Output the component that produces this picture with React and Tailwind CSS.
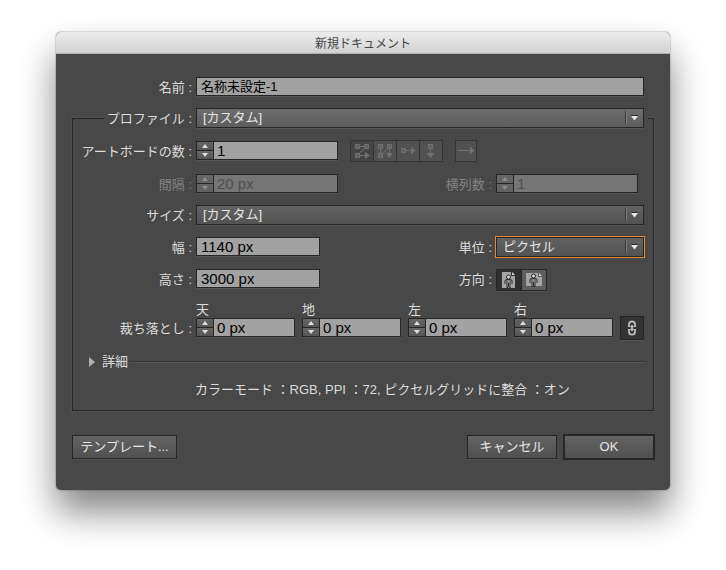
import { useState } from "react";

const jp = "font-['Liberation_Sans','Noto_Sans_CJK_JP',sans-serif]";
const edge = "border border-[#262626] shadow-[0_1px_0_#555555]";

function Label({ htmlFor, children, className = "", dim = false }) {
  return (
    <label
      htmlFor={htmlFor}
      className={`h-[19px] shrink-0 pr-1 text-right text-[13px] leading-[21px] whitespace-nowrap ${dim ? "text-[#828282]" : "text-[#dcdcdc]"} ${className}`}
    >
      {children}
    </label>
  );
}

function TextField({ id, value, className = "" }) {
  return (
    <input
      id={id}
      type="text"
      defaultValue={value}
      className={`h-[19px] min-w-0 rounded-none bg-[#a2a2a2] px-1 pt-px text-black outline-none ${edge} ${className}`}
    />
  );
}

function Stepper({ id, value, disabled = false, className = "" }) {
  const [text, setText] = useState(value);
  const step = (delta) => {
    const unit = text.replace(/^-?\d+/, "");
    setText(`${(parseInt(text, 10) || 0) + delta}${unit}`);
  };
  const button = `flex flex-1 items-center justify-center bg-linear-to-b ${
    disabled ? "from-[#666666] to-[#626262] text-[#8e8e8e]" : "from-[#666666] to-[#555555] text-[#dedede]"
  }`;
  return (
    <div className={`flex h-[19px] min-w-0 ${edge} ${className}`}>
      <div className="flex w-4 shrink-0 flex-col gap-px bg-[#262626]">
        <button type="button" aria-label="増やす" disabled={disabled} onClick={() => step(1)} className={button}>
          <svg width="6" height="4" viewBox="0 0 6 4" fill="currentColor"><path d="M0 4 3 0l3 4z" /></svg>
        </button>
        <button type="button" aria-label="減らす" disabled={disabled} onClick={() => step(-1)} className={button}>
          <svg width="6" height="4" viewBox="0 0 6 4" fill="currentColor"><path d="M0 0h6L3 4z" /></svg>
        </button>
      </div>
      <input
        id={id}
        type="text"
        value={text}
        disabled={disabled}
        onChange={(e) => setText(e.target.value)}
        className={`w-0 min-w-0 flex-1 rounded-none border-l border-[#262626] px-[3px] text-[15px] leading-[17px] outline-none ${
          disabled ? "bg-[#757575] text-[#505050]" : "bg-[#a2a2a2] text-black"
        }`}
      />
    </div>
  );
}

function Dropdown({ id, options, focused = false, light = false, className = "" }) {
  return (
    <div className={`relative ${className}`}>
      <select
        id={id}
        className={`block h-5 w-full appearance-none rounded-none border border-[#262626] bg-linear-to-b pl-[6px] text-[13px] leading-[18px] text-[#e6e6e6] outline-none ${
          light ? "from-[#6d6d6d] to-[#5d5d5d]" : "from-[#636363] to-[#525252]"
        } ${focused ? "shadow-[0_0_0_1px_#e08a3c]" : "shadow-[0_1px_0_#555555]"}`}
      >
        {options.map((o) => (
          <option key={o}>{o}</option>
        ))}
      </select>
      <svg className="pointer-events-none absolute top-[3px] right-[5px]" width="14" height="14" viewBox="0 0 14 14">
        <path d="M.5 0v13" stroke="#3a3a3a" />
        <path d="M1.5 0v13" stroke="#7d7d7d" />
        <path d="M6 4.500h7" stroke="#2c2c2c" />
        <path d="M6 5h7L9.500 9.500z" fill="#e8e8e8" />
      </svg>
    </div>
  );
}

function GlyphButton({ label, pressed = false, children, className = "" }) {
  return (
    <button
      type="button"
      aria-label={label}
      aria-pressed={pressed}
      className={`flex h-[22px] items-center justify-center border border-[#343434] ${pressed ? "bg-[#454545]" : "bg-[#515151]"} ${className}`}
    >
      <svg className="shrink-0" width="20" height="20" viewBox="0 0 20 20" fill="none" stroke="#707070">
        {children}
      </svg>
    </button>
  );
}

function Person() {
  return (
    <g>
      <path d="M-3.500 8V5Q-3.500 3.500-2 3.500H2Q3.500 3.500 3.500 5V8" stroke="#2c2c2c" fill="none" />
      <path d="M-1.500 4V11.500M1.500 4V11.500M-2 11.500h1.500M.5 11.500H2" stroke="#2c2c2c" fill="none" />
      <path d="M0 4v3" stroke="#8d8d8d" strokeWidth="2" />
      <path d="M0 7v4" stroke="#2c2c2c" />
      <circle cx="0" cy="1" r="2" fill="#d8d8d8" stroke="#2c2c2c" />
    </g>
  );
}

const bleeds = [
  ["bleed-top", "天"],
  ["bleed-bottom", "地"],
  ["bleed-left", "左"],
  ["bleed-right", "右"],
];

export default function App() {
  const [linked, setLinked] = useState(true);
  const [portrait, setPortrait] = useState(true);
  const action = "bg-linear-to-b from-[#636363] to-[#505050] text-[13px] text-[#e6e6e6]";

  return (
    <main className={`bg-white px-14 pt-8 pb-20 ${jp}`}>
      <form
        onSubmit={(e) => e.preventDefault()}
        className="rounded-[5px] bg-[#484848] shadow-[0_0_1px_1px_rgba(0,0,0,0.14),0_22px_36px_rgba(0,0,0,0.48)]"
      >
        <h1 className="h-[22px] rounded-t-[5px] border-b border-[#aeb2ae] bg-linear-to-b from-[#ececec] to-[#d2d2d2] text-center text-[12px] leading-[24px] text-[#444444]">
          新規ドキュメント
        </h1>

        <div className="px-4 pt-[23px] pb-[30px]">
          <div className="flex pr-[10px]">
            <Label htmlFor="name" className="w-[124px]">名前 :</Label>
            <TextField id="name" value="名称未設定-1" className="flex-1 text-[13px]" />
          </div>

          <section className="mt-[22px] border border-[#262626] pb-[10px] shadow-[0_0_0_1px_#505050]">
            <div className="-mt-[11px] mr-[5px] ml-[31px] flex bg-[#484848] pr-1">
              <Label htmlFor="profile" className="w-[92px]">プロファイル :</Label>
              <Dropdown id="profile" options={["[カスタム]"]} light className="flex-1" />
            </div>

            <div className="pr-[9px]">
              <div className="mt-[13px] flex items-start">
                <Label htmlFor="artboards" className="w-[123px]">アートボードの数 :</Label>
                <Stepper id="artboards" value="1" className="w-[142px]" />
                <div className="-my-px ml-3 flex">
                  <GlyphButton label="横に配列(グリッド)" pressed className="w-6">
                    <path d="M3.500 3.500h4v4h-4zM12.500 3.500h4v4h-4zM3.500 12.500h4v4h-4z" fill="#626262" />
                    <path d="M8 5.500h4M12 8l-4.500 4M8 14.500h5" />
                    <path d="M13 11l5 3.500-5 3.500z" fill="#707070" stroke="none" />
                  </GlyphButton>
                  <GlyphButton label="縦に配列(グリッド)" className="-ml-px w-6">
                    <path d="M3.500 3.500h4v4h-4zM12.500 3.500h4v4h-4zM3.500 12.500h4v4h-4z" fill="#626262" />
                    <path d="M5.500 8v4M8 12.500 12.500 8M14.500 8v5" />
                    <path d="M11 12h7l-3.500 5z" fill="#707070" stroke="none" />
                  </GlyphButton>
                  <GlyphButton label="横一列" className="-ml-px w-6">
                    <path d="M3.500 7.500h4v4h-4z" fill="#626262" />
                    <path d="M8 9.500h6" />
                    <path d="M13 5.500l4.500 4-4.500 4z" fill="#707070" stroke="none" />
                  </GlyphButton>
                  <GlyphButton label="縦一列" className="-ml-px w-6">
                    <path d="M7.500 3.500h4v4h-4z" fill="#626262" />
                    <path d="M9.500 8v5" />
                    <path d="M5.500 12h8l-4 5z" fill="#707070" stroke="none" />
                  </GlyphButton>
                </div>
                <GlyphButton label="右から左へ配列" className="-my-px ml-3 w-[22px]">
                  <path d="M2 9.500h12" />
                  <path d="M14 5.500l4.500 4-4.500 4z" fill="#707070" stroke="none" />
                </GlyphButton>
              </div>

              <div className="mt-[13px] flex">
                <Label htmlFor="spacing" dim className="w-[123px]">間隔 :</Label>
                <Stepper id="spacing" value="20 px" disabled className="w-[142px]" />
                <Label htmlFor="columns" dim className="ml-auto">横列数 :</Label>
                <div className="w-[148px]">
                  <Stepper id="columns" value="1" disabled className="w-[142px]" />
                </div>
              </div>

              <div className="mt-3 flex">
                <Label htmlFor="size" className="w-[123px]">サイズ :</Label>
                <Dropdown id="size" options={["[カスタム]"]} className="flex-1" />
              </div>

              <div className="mt-3 flex">
                <Label htmlFor="width" className="w-[123px]">幅 :</Label>
                <TextField id="width" value="1140 px" className="w-[124px] text-[15px]" />
                <Label htmlFor="unit" className="ml-auto">単位 :</Label>
                <Dropdown id="unit" options={["ピクセル", "ミリメートル", "ポイント"]} focused className="w-[148px]" />
              </div>

              <div className="mt-3 flex">
                <Label htmlFor="height" className="w-[123px]">高さ :</Label>
                <TextField id="height" value="3000 px" className="w-[124px] text-[15px]" />
                <Label htmlFor="portrait" className="ml-auto">方向 :</Label>
                <div className="flex w-[148px]">
                  <button
                    id="portrait"
                    type="button"
                    aria-label="縦置き"
                    aria-pressed={portrait}
                    onClick={() => setPortrait(true)}
                    className={`flex h-[22px] w-[26px] items-center justify-center ${edge} ${portrait ? "bg-[#303030]" : "bg-[#5c5c5c]"}`}
                  >
                    <svg width="16" height="18" viewBox="0 0 16 18">
                      <path d="M1 1h9v4h4v12H1z" fill="#a4a4a4" />
                      <path d="M11 1l3 3h-3z" fill="#d0d0d0" />
                      <g transform="translate(7.500 5)"><Person /></g>
                    </svg>
                  </button>
                  <button
                    type="button"
                    aria-label="横置き"
                    aria-pressed={!portrait}
                    onClick={() => setPortrait(false)}
                    className={`-ml-px flex h-[22px] w-[26px] items-center justify-center ${edge} ${portrait ? "bg-[#5e5e5e]" : "bg-[#303030]"}`}
                  >
                    <svg width="18" height="18" viewBox="0 0 18 18">
                      <path d="M1 2h12v4h4v9H1z" fill="#a4a4a4" />
                      <path d="M14 2l3 3h-3z" fill="#d0d0d0" />
                      <g transform="translate(8.500 4)"><Person /></g>
                    </svg>
                  </button>
                </div>
              </div>

              <div className="mt-[11px] flex items-end">
                <Label htmlFor="bleed-top" className="w-[123px]">裁ち落とし :</Label>
                <div className="flex min-w-0 flex-1 items-end gap-[7px]">
                  {bleeds.map(([id, name]) => (
                    <div key={id} className="min-w-0 flex-1">
                      <label htmlFor={id} className="block h-4 text-[13px] leading-4 text-[#dcdcdc]">{name}</label>
                      <Stepper id={id} value="0 px" />
                    </div>
                  ))}
                  <button
                    type="button"
                    aria-label="裁ち落としを連動"
                    aria-pressed={linked}
                    onClick={() => setLinked(!linked)}
                    className={`-mb-[3px] flex h-6 w-6 shrink-0 items-center justify-center ${edge} ${linked ? "bg-[#333333]" : "bg-[#5c5c5c]"}`}
                  >
                    <svg width="10" height="16" viewBox="0 0 10 16" fill="none" stroke="#b4b4b4" strokeWidth="2">
                      <path d="M2 6V4Q2 1.500 5 1.500T8 4v2M2 10v2q0 2.500 3 2.500T8 12v-2" />
                      <path d="M1 6.500h3M6 6.500h3M1 9.500h3M6 9.500h3" strokeWidth="1" />
                      <path d="M5 5v6" />
                    </svg>
                  </button>
                </div>
              </div>

              <div className="mt-[17px] flex items-center pl-4">
                <button type="button" aria-expanded="false" className="flex h-4 items-center gap-[7px] text-[13px] leading-4 text-[#dcdcdc]">
                  <svg width="6" height="10" viewBox="0 0 6 10">
                    <path d="M0 0l6 5-6 5z" fill="#b0b0b0" />
                  </svg>
                  詳細
                </button>
                <div className="ml-px h-0.5 flex-1 border-t border-b border-t-[#353535] border-b-[#575757]" />
              </div>

              <p className="mt-[10px] pl-[122px] text-[13px] leading-5 text-[#dcdcdc]">
                カラーモード ：RGB, PPI ：72, ピクセルグリッドに整合 ：オン
              </p>
            </div>
          </section>

          <div className="mt-[23px] flex items-center">
            <button type="button" className={`h-6 w-[105px] ${edge} ${action}`}>テンプレート...</button>
            <button type="button" className={`ml-auto h-6 w-[90px] ${edge} ${action}`}>キャンセル</button>
            <button type="submit" className={`-mr-px ml-[6px] h-[26px] w-[92px] border-2 border-[#262626] ${action}`}>OK</button>
          </div>
        </div>
      </form>
    </main>
  );
}
